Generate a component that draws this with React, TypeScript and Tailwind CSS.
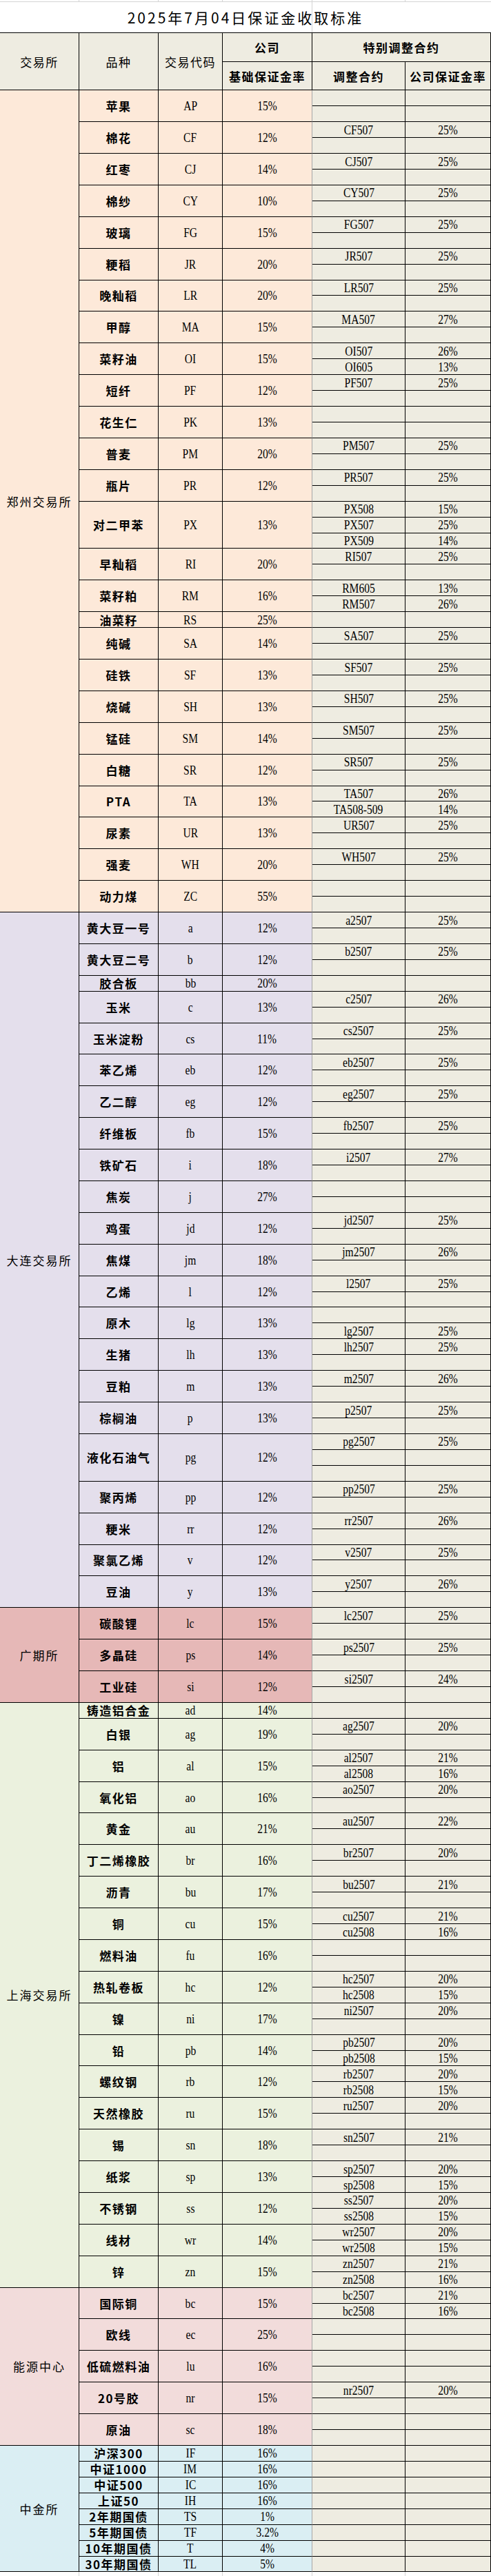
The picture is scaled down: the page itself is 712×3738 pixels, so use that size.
import React from "react";

type Adj = [string, string];
type Item = { n: string; c: string; r: string; adj: Adj[] };
type Group = { name: string; bg: string; items: Item[] };

function it(n: string, c: string, r: string, adj: Adj[] = [], rows = 2): Item {
  const a: Adj[] = [...adj];
  while (a.length < rows) a.push(["", ""]);
  return { n, c, r, adj: a };
}

const groups: Group[] = [
  {
    name: "郑州交易所",
    bg: "bg-[#FDE9D9]",
    items: [
      it("苹果", "AP", "15%"),
      it("棉花", "CF", "12%", [["CF507", "25%"]]),
      it("红枣", "CJ", "14%", [["CJ507", "25%"]]),
      it("棉纱", "CY", "10%", [["CY507", "25%"]]),
      it("玻璃", "FG", "15%", [["FG507", "25%"]]),
      it("粳稻", "JR", "20%", [["JR507", "25%"]]),
      it("晚籼稻", "LR", "20%", [["LR507", "25%"]]),
      it("甲醇", "MA", "15%", [["MA507", "27%"]]),
      it("菜籽油", "OI", "15%", [["OI507", "26%"], ["OI605", "13%"]]),
      it("短纤", "PF", "12%", [["PF507", "25%"]]),
      it("花生仁", "PK", "13%"),
      it("普麦", "PM", "20%", [["PM507", "25%"]]),
      it("瓶片", "PR", "12%", [["PR507", "25%"]]),
      it("对二甲苯", "PX", "13%", [["PX508", "15%"], ["PX507", "25%"], ["PX509", "14%"]], 3),
      it("早籼稻", "RI", "20%", [["RI507", "25%"]]),
      it("菜籽粕", "RM", "16%", [["RM605", "13%"], ["RM507", "26%"]]),
      it("油菜籽", "RS", "25%", [], 1),
      it("纯碱", "SA", "14%", [["SA507", "25%"]]),
      it("硅铁", "SF", "13%", [["SF507", "25%"]]),
      it("烧碱", "SH", "13%", [["SH507", "25%"]]),
      it("锰硅", "SM", "14%", [["SM507", "25%"]]),
      it("白糖", "SR", "12%", [["SR507", "25%"]]),
      it("PTA", "TA", "13%", [["TA507", "26%"], ["TA508-509", "14%"]]),
      it("尿素", "UR", "13%", [["UR507", "25%"]]),
      it("强麦", "WH", "20%", [["WH507", "25%"]]),
      it("动力煤", "ZC", "55%"),
    ],
  },
  {
    name: "大连交易所",
    bg: "bg-[#E4DFEC]",
    items: [
      it("黄大豆一号", "a", "12%", [["a2507", "25%"]]),
      it("黄大豆二号", "b", "12%", [["b2507", "25%"]]),
      it("胶合板", "bb", "20%", [], 1),
      it("玉米", "c", "13%", [["c2507", "26%"]]),
      it("玉米淀粉", "cs", "11%", [["cs2507", "25%"]]),
      it("苯乙烯", "eb", "12%", [["eb2507", "25%"]]),
      it("乙二醇", "eg", "12%", [["eg2507", "25%"]]),
      it("纤维板", "fb", "15%", [["fb2507", "25%"]]),
      it("铁矿石", "i", "18%", [["i2507", "27%"]]),
      it("焦炭", "j", "27%"),
      it("鸡蛋", "jd", "12%", [["jd2507", "25%"]]),
      it("焦煤", "jm", "18%", [["jm2507", "26%"]]),
      it("乙烯", "l", "12%", [["l2507", "25%"]]),
      it("原木", "lg", "13%", [["", ""], ["lg2507", "25%"]]),
      it("生猪", "lh", "13%", [["lh2507", "25%"]]),
      it("豆粕", "m", "13%", [["m2507", "26%"]]),
      it("棕榈油", "p", "13%", [["p2507", "25%"]]),
      it("液化石油气", "pg", "12%", [["pg2507", "25%"]], 3),
      it("聚丙烯", "pp", "12%", [["pp2507", "25%"]]),
      it("粳米", "rr", "12%", [["rr2507", "26%"]]),
      it("聚氯乙烯", "v", "12%", [["v2507", "25%"]]),
      it("豆油", "y", "13%", [["y2507", "26%"]]),
    ],
  },
  {
    name: "广期所",
    bg: "bg-[#E6B8B7]",
    items: [
      it("碳酸锂", "lc", "15%", [["lc2507", "25%"]]),
      it("多晶硅", "ps", "14%", [["ps2507", "25%"]]),
      it("工业硅", "si", "12%", [["si2507", "24%"]]),
    ],
  },
  {
    name: "上海交易所",
    bg: "bg-[#EBF1DE]",
    items: [
      it("铸造铝合金", "ad", "14%", [], 1),
      it("白银", "ag", "19%", [["ag2507", "20%"]]),
      it("铝", "al", "15%", [["al2507", "21%"], ["al2508", "16%"]]),
      it("氧化铝", "ao", "16%", [["ao2507", "20%"]]),
      it("黄金", "au", "21%", [["au2507", "22%"]]),
      it("丁二烯橡胶", "br", "16%", [["br2507", "20%"]]),
      it("沥青", "bu", "17%", [["bu2507", "21%"]]),
      it("铜", "cu", "15%", [["cu2507", "21%"], ["cu2508", "16%"]]),
      it("燃料油", "fu", "16%"),
      it("热轧卷板", "hc", "12%", [["hc2507", "20%"], ["hc2508", "15%"]]),
      it("镍", "ni", "17%", [["ni2507", "20%"]]),
      it("铅", "pb", "14%", [["pb2507", "20%"], ["pb2508", "15%"]]),
      it("螺纹钢", "rb", "12%", [["rb2507", "20%"], ["rb2508", "15%"]]),
      it("天然橡胶", "ru", "15%", [["ru2507", "20%"]]),
      it("锡", "sn", "18%", [["sn2507", "21%"]]),
      it("纸浆", "sp", "13%", [["sp2507", "20%"], ["sp2508", "15%"]]),
      it("不锈钢", "ss", "12%", [["ss2507", "20%"], ["ss2508", "15%"]]),
      it("线材", "wr", "14%", [["wr2507", "20%"], ["wr2508", "15%"]]),
      it("锌", "zn", "15%", [["zn2507", "21%"], ["zn2508", "16%"]]),
    ],
  },
  {
    name: "能源中心",
    bg: "bg-[#F2DCDB]",
    items: [
      it("国际铜", "bc", "15%", [["bc2507", "21%"], ["bc2508", "16%"]]),
      it("欧线", "ec", "25%"),
      it("低硫燃料油", "lu", "16%"),
      it("20号胶", "nr", "15%", [["nr2507", "20%"]]),
      it("原油", "sc", "18%"),
    ],
  },
  {
    name: "中金所",
    bg: "bg-[#DAEEF3]",
    items: [
      it("沪深300", "IF", "16%", [], 1),
      it("中证1000", "IM", "16%", [], 1),
      it("中证500", "IC", "16%", [], 1),
      it("上证50", "IH", "16%", [], 1),
      it("2年期国债", "TS", "1%", [], 1),
      it("5年期国债", "TF", "3.2%", [], 1),
      it("10年期国债", "T", "4%", [], 1),
      it("30年期国债", "TL", "5%", [], 1),
    ],
  },
];

const Num = ({ t }: { t: string }) => (
  <span className="inline-block scale-x-[0.82] font-['Liberation_Serif',serif] text-[19px] leading-none whitespace-nowrap">
    {t}
  </span>
);

const cjk = "font-['Noto_Sans_CJK_SC','Noto_Sans',sans-serif]";

function GridStrip({ h }: { h: string }) {
  return (
    <div className={`flex ${h} bg-white`}>
      <div className="w-[115px] border-r border-r-[#d4d4d4]" />
      <div className="w-[115px] border-r border-r-[#d4d4d4]" />
      <div className="w-[93px] border-r border-r-[#d4d4d4]" />
      <div className="w-[130px] border-r border-r-[#d4d4d4]" />
      <div className="w-[135px] border-r border-r-[#d4d4d4]" />
      <div className="flex-1" />
    </div>
  );
}

export default function App() {
  return (
    <div className={`w-[712px] bg-white text-black ${cjk}`}>
      <div className="border-b border-b-[#d4d4d4]">
        <GridStrip h="h-[2px]" />
      </div>
      <div className="h-[44px] flex items-center justify-center bg-[linear-gradient(to_right,transparent_452px,#d4d4d4_452px,#d4d4d4_453px,transparent_453px)]">
        <span className="text-[21px] tracking-[3px] leading-none whitespace-nowrap">2025年7月04日保证金收取标准</span>
      </div>
      {/* Header */}
      <div className="flex h-[84.3px] border-t border-t-black bg-[#EEECE1] text-[17px] tracking-[1.5px] leading-none">
        <div className="w-[115px] shrink-0 border-r border-b border-black flex items-center justify-center">交易所</div>
        <div className="w-[115px] shrink-0 border-r border-b border-black flex items-center justify-center">品种</div>
        <div className="w-[93px] shrink-0 border-r border-b border-black flex items-center justify-center whitespace-nowrap">交易代码</div>
        <div className="w-[130px] shrink-0 flex flex-col border-r border-black">
          <div className="h-[42.3px] border-b border-black flex items-center justify-center font-bold">公司</div>
          <div className="flex-1 border-b border-black flex items-center justify-center font-bold whitespace-nowrap">基础保证金率</div>
        </div>
        <div className="flex-1 flex flex-col">
          <div className="h-[42.3px] border-b border-r border-black flex items-center justify-center font-bold whitespace-nowrap">特别调整合约</div>
          <div className="flex-1 flex">
            <div className="w-[135px] shrink-0 border-r border-b border-black flex items-center justify-center font-bold whitespace-nowrap">调整合约</div>
            <div className="flex-1 border-r border-b border-black flex items-center justify-center font-bold whitespace-nowrap">公司保证金率</div>
          </div>
        </div>
      </div>
      {/* Body */}
      {groups.map((g) => (
        <div key={g.name} className="flex">
          <div className={`w-[115px] shrink-0 border-r border-b border-black flex items-center justify-center ${g.bg}`}>
            <span className="text-[17px] tracking-[2px] leading-none whitespace-nowrap">{g.name}</span>
          </div>
          <div className="flex-1 flex flex-col">
            {g.items.map((item) => (
              <div key={item.c} className="flex">
                <div className={`w-[115px] shrink-0 border-r border-b border-black flex items-center justify-center ${g.bg}`}>
                  <span className="text-[17px] font-bold tracking-[1.5px] leading-none whitespace-nowrap">{item.n}</span>
                </div>
                <div className={`w-[93px] shrink-0 border-r border-b border-black flex items-center justify-center ${g.bg}`}>
                  <Num t={item.c} />
                </div>
                <div className={`w-[130px] shrink-0 border-r border-b border-b-black border-r-[#a6a6a6] flex items-center justify-center ${g.bg}`}>
                  <Num t={item.r} />
                </div>
                <div className="flex-1 flex flex-col bg-[#EEECE1]">
                  {item.adj.map((a, i) => (
                    <div key={i} className="flex h-[22.95px]">
                      <div className="w-[135px] shrink-0 border-r border-b border-black flex items-center justify-center">
                        <Num t={a[0]} />
                      </div>
                      <div className="flex-1 border-r border-b border-black flex items-center justify-center">
                        <Num t={a[1]} />
                      </div>
                    </div>
                  ))}
                </div>
              </div>
            ))}
          </div>
        </div>
      ))}
      <GridStrip h="h-[8px]" />
    </div>
  );
}
